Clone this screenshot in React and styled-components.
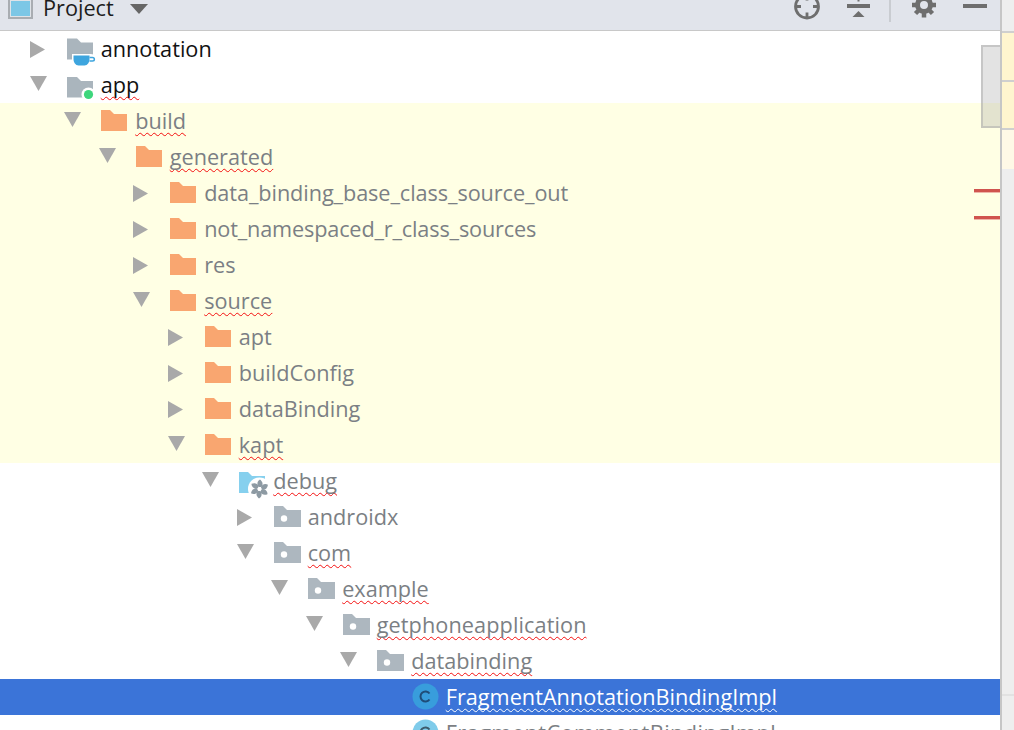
import React from "react"
import styled, { createGlobalStyle } from "styled-components"

const INDENT = 34.5

const GlobalStyle = createGlobalStyle`
	html, body {
		margin: 0;
		padding: 0;
		background: #fff;
		overflow: hidden;
	}
`

const Page = styled.div`
	width: 1014px;
	height: 730px;
	display: flex;
	overflow: hidden;
	font-family: "Open Sans", "Noto Sans", sans-serif;
`

const Main = styled.div`
	width: 1000px;
	display: flex;
	flex-direction: column;
	flex: none;
`

const Header = styled.header`
	height: 30px;
	flex: none;
	background: #e1e4eb;
	border-bottom: 1px solid #c8c8c8;
	display: flex;
	align-items: flex-start;
	padding-left: 8px;
	overflow: hidden;
`

const ProjectBox = styled.div`
	width: 25px;
	height: 19px;
	box-sizing: border-box;
	border: 2px solid #a9adb2;
	border-top: 0;
	background: #7cc7e6;
	box-shadow: inset 0 0 0 1px #dfe3e8;
`

const Title = styled.span`
	margin: -7px 0 0 10px;
	font-size: 21.7px;
	line-height: 30px;
	color: #1c1c1c;
`

const ToolIcon = styled.svg`
	display: block;
	flex: none;
	margin-left: ${p => p.$gap}px;
	margin-top: ${p => p.$top || 0}px;
`

const Divider = styled.div`
	width: 2px;
	height: 22px;
	flex: none;
	background: #c9ccd1;
	margin-left: 18px;
`

const Body = styled.div`
	flex: 1;
	position: relative;
	min-height: 0;
`

const Row = styled.div`
	height: 36px;
	display: flex;
	align-items: center;
	box-sizing: border-box;
	padding-left: ${p => 29.7 + p.$level * INDENT}px;
	background: ${p => (p.$selected ? "#3b74d8" : p.$generated ? "#ffffe4" : "#fff")};
`

const Arrow = styled.svg`
	display: block;
	flex: none;
	width: 17px;
	height: 17px;
	margin-top: ${p => (p.$open ? -4 : 0)}px;
`

const ArrowSlot = styled.div`
	width: 37px;
	flex: none;
`

const IconSlot = styled.div`
	width: 34px;
	flex: none;
	display: flex;
	align-items: center;
	margin-top: -1px;

	svg {
		display: block;
		overflow: visible;
	}
`

const Label = styled.span`
	font-size: 21.7px;
	line-height: 30px;
	white-space: nowrap;
	letter-spacing: ${p => p.$spacing || 0}px;
	color: ${p => (p.$selected ? "#fff" : p.$dark ? "#111" : "#7b7f84")};
	margin-top: -1px;
	text-decoration: ${p =>
		p.$typo ? `underline wavy ${p.$selected ? "#fff" : "#f40f0f"} 1.4px` : "none"};
	text-underline-offset: 3px;
	text-decoration-skip-ink: none;
`

const Thumb = styled.div`
	position: absolute;
	top: 14px;
	right: 0;
	width: 19px;
	height: 83px;
	box-sizing: border-box;
	border: 2px solid rgba(170, 170, 170, 0.5);
	border-right: 0;
	background: rgba(150, 150, 150, 0.27);
`

const ErrorMark = styled.div`
	position: absolute;
	top: ${p => p.$top}px;
	right: 0;
	width: 26px;
	height: 3px;
	background: #d0544e;
	box-shadow: 0 1px 0 #eeb5a8;
`

const Strip = styled.aside`
	flex: 1;
	display: flex;
	flex-direction: column;
	background: #eee;
	border-left: 2px solid #c6c6c6;
	position: relative;
`

const StripCell = styled.div`
	height: ${p => p.$h}px;
	flex: none;
	background: ${p => p.$color};
	border-bottom: ${p => (p.$line ? "2px solid #cfcfcf" : "0")};
`

const StripTick = styled.div`
	position: absolute;
	left: 0;
	right: 0;
	top: 694px;
	height: 2px;
	background: #e2e2e2;
`

const ArrowIcon = ({ open }) => (
	<Arrow $open={open} viewBox="0 0 17 17">
		{open ? <path d="M0 1h17L8.500 16z" fill="#a9a9a9" /> : <path d="M0 0l15 8.500L0 17z" fill="#a9a9a9" />}
	</Arrow>
)

const Folder = ({ fill }) => (
	<svg width="26" height="21" viewBox="0 0 26 21">
		<path d="M0 0h9l4 4h13v17H0z" fill={fill} />
	</svg>
)

const CupFolder = () => (
	<svg width="29" height="26" viewBox="0 0 29 26">
		<path d="M0 2.500h10l4 4h12v17H0z" fill="#aab5bd" />
		<path d="M5 18h19l5 1v6l-8 5H10l-5-5z" fill="#fff" />
		<path d="M6.500 19.500h16v3.500c0 3.500-2 6.500-5 6.500h-6c-3 0-5-3-5-6.500z" fill="#3ea5de" />
		<path d="M22.500 21.500h3c2.500 0 2.500 3.500 0 3.500h-3" fill="none" stroke="#3ea5de" strokeWidth="1.500" />
	</svg>
)

const DotFolder = () => (
	<svg width="29" height="26" viewBox="0 0 29 26">
		<path d="M0 5h10l4 4h12v16.500H0z" fill="#aab5bd" />
		<circle cx="21.500" cy="22.500" r="7" fill="#fff" />
		<circle cx="21.500" cy="22.500" r="4.600" fill="#3ed67c" />
	</svg>
)

const PackageFolder = () => (
	<svg width="27" height="21" viewBox="0 0 27 21">
		<path d="M0 0h9l4 4h14v17H0z" fill="#adb7bf" />
		<circle cx="10" cy="12.500" r="3.200" fill="#fff" />
	</svg>
)

const SourceFolder = () => (
	<svg width="29" height="24" viewBox="0 0 29 24">
		<path d="M0 3h9l4 4h13v17H0z" fill="#86d0ee" />
		<circle cx="20.500" cy="20" r="11.500" fill="#fff" />
		<g fill="#8d9aa3" transform="translate(20.500 20)">
			{[0, 60, 120, 180, 240, 300].map(angle => (
				<path key={angle} d="M-.5 -2C-3 -4 -2.500 -8 .5 -9.500c2.500 2 3.500 5 1.500 7.500z" transform={`rotate(${angle})`} />
			))}
		</g>
		<circle cx="20.500" cy="20" r="1.500" fill="#fff" />
	</svg>
)

const ClassIcon = ({ color, ink }) => (
	<svg width="27" height="27" viewBox="0 0 27 27">
		<circle cx="13.500" cy="13.500" r="13" fill={color} />
		<path d="M17.500 10.500a5 5 0 1 0 0 6" fill="none" stroke={ink} strokeWidth="2" />
	</svg>
)

const rows = [
	{ level: 0, label: "annotation", icon: "cup", arrow: "closed", dark: true },
	{ level: 0, label: "app", icon: "dot", arrow: "open", dark: true, typo: true },
	{ level: 1, label: "build", icon: "gen", arrow: "open", typo: true, generated: true },
	{ level: 2, label: "generated", icon: "gen", arrow: "open", typo: true, generated: true },
	{ level: 3, label: "data_binding_base_class_source_out", icon: "gen", arrow: "closed", generated: true, spacing: -0.09 },
	{ level: 3, label: "not_namespaced_r_class_sources", icon: "gen", arrow: "closed", generated: true, spacing: -0.17 },
	{ level: 3, label: "res", icon: "gen", arrow: "closed", generated: true },
	{ level: 3, label: "source", icon: "gen", arrow: "open", typo: true, generated: true },
	{ level: 4, label: "apt", icon: "gen", arrow: "closed", generated: true },
	{ level: 4, label: "buildConfig", icon: "gen", arrow: "closed", generated: true },
	{ level: 4, label: "dataBinding", icon: "gen", arrow: "closed", generated: true },
	{ level: 4, label: "kapt", icon: "gen", arrow: "open", typo: true, generated: true },
	{ level: 5, label: "debug", icon: "src", arrow: "open", typo: true },
	{ level: 6, label: "androidx", icon: "pkg", arrow: "closed" },
	{ level: 6, label: "com", icon: "pkg", arrow: "open", typo: true },
	{ level: 7, label: "example", icon: "pkg", arrow: "open", typo: true },
	{ level: 8, label: "getphoneapplication", icon: "pkg", arrow: "open", typo: true, spacing: 0.08 },
	{ level: 9, label: "databinding", icon: "pkg", arrow: "open", typo: true },
	{ level: 10, label: "FragmentAnnotationBindingImpl", icon: "class", selected: true, typo: true },
	{ level: 10, label: "FragmentCommentBindingImpl", icon: "classLight", typo: true, spacing: 0.45 },
]

const rowIcon = kind => {
	switch (kind) {
		case "cup":
			return <CupFolder />
		case "dot":
			return <DotFolder />
		case "gen":
			return <Folder fill="#f9a670" />
		case "src":
			return <SourceFolder />
		case "pkg":
			return <PackageFolder />
		case "class":
			return <ClassIcon color="#389ddc" ink="#1f4d78" />
		default:
			return <ClassIcon color="#7fcbea" ink="#3d5a6c" />
	}
}

export default function App() {
	return (
		<Page>
			<GlobalStyle />
			<Main>
				<Header>
					<ProjectBox />
					<Title>Project</Title>
					<ToolIcon $gap={16} $top={4} width="18" height="10" viewBox="0 0 18 10">
						<path d="M0 0h18L9 10z" fill="#666" />
					</ToolIcon>
					<ToolIcon $gap={646} width="26" height="20" viewBox="0 0.500 26 20">
						<circle cx="13" cy="7" r="11.500" fill="none" stroke="#6e6e6e" strokeWidth="2.800" />
						<path d="M13 -5v6M13 13v6M1 7h6M19 7h6" stroke="#6e6e6e" strokeWidth="2.800" />
					</ToolIcon>
					<ToolIcon $gap={27} width="24" height="18" viewBox="0 0 24 18">
						<path d="M0 4h23v4H0z" fill="#6e6e6e" />
						<path d="M10.500 0h2v1.500h-2z" fill="#6e6e6e" />
						<path d="M11.500 11l6 6h-12z" fill="#6e6e6e" />
					</ToolIcon>
					<Divider />
					<ToolIcon $gap={21} width="24" height="18" viewBox="0 1 24 18">
						<circle cx="12" cy="6" r="6.500" fill="none" stroke="#6e6e6e" strokeWidth="5" />
						<path d="M12 -3.500v5M12 10.500v8M-.5 6h5M19.500 6h5M3.500 -2.500l4 4M16.500 10.500l4 4M3.500 14.500l4-4M16.500 1.500l4-4" stroke="#6e6e6e" strokeWidth="4.500" />
					</ToolIcon>
					<ToolIcon $gap={27} width="24" height="8" viewBox="0 0 24 8">
						<path d="M0 4h24v4H0z" fill="#6e6e6e" />
					</ToolIcon>
				</Header>
				<Body>
					{rows.map(r => (
						<Row key={r.label} $level={r.level} $selected={r.selected} $generated={r.generated}>
							<ArrowSlot>{r.arrow && <ArrowIcon open={r.arrow === "open"} />}</ArrowSlot>
							<IconSlot>{rowIcon(r.icon)}</IconSlot>
							<Label $dark={r.dark} $typo={r.typo} $selected={r.selected} $spacing={r.spacing}>
								{r.label}
							</Label>
						</Row>
					))}
					<Thumb />
					<ErrorMark $top={158} />
					<ErrorMark $top={185} />
				</Body>
			</Main>
			<Strip>
				<StripCell $h={31} $color="#eeeeee" $line />
				<StripCell $h={47} $color="#fff5cf" $line />
				<StripCell $h={46} $color="#fff5cf" $line />
				<StripCell $h={39} $color="#fff9e6" />
				<StripTick />
			</Strip>
		</Page>
	)
}
